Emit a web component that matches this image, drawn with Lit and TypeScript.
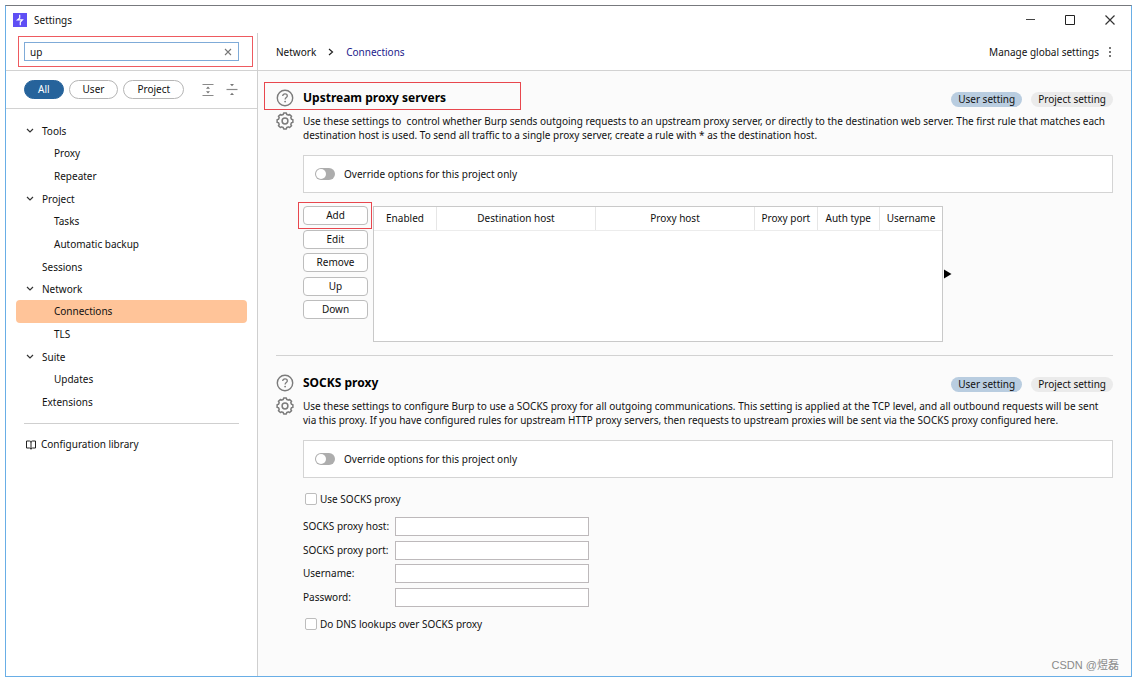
import { LitElement, html, css, svg, nothing } from "lit";
import { customElement, property, state } from "lit/decorators.js";
import { classMap } from "lit/directives/class-map.js";

interface TreeNode {
  label: string;
  children?: string[];
}

const TREE: TreeNode[] = [
  { label: "Tools", children: ["Proxy", "Repeater"] },
  { label: "Project", children: ["Tasks", "Automatic backup"] },
  { label: "Sessions" },
  { label: "Network", children: ["Connections", "TLS"] },
  { label: "Suite", children: ["Updates"] },
  { label: "Extensions" },
];

const COLUMNS = ["Enabled", "Destination host", "Proxy host", "Proxy port", "Auth type", "Username"];

const base = css`
  *,
  *::before,
  *::after {
    box-sizing: border-box;
  }
  button,
  input {
    font: inherit;
    color: inherit;
    margin: 0;
  }
  button {
    padding: 0;
    border: 0;
    background: none;
  }
  a {
    color: inherit;
    text-decoration: none;
  }
  svg {
    display: block;
  }
`;

function gearPath(cx: number, cy: number, inner: number, outer: number, teeth: number): string {
  const points: string[] = [];
  const step = (Math.PI * 2) / teeth;
  for (let i = 0; i < teeth; i++) {
    const a = i * step - Math.PI / 2;
    const at = (r: number, angle: number) =>
      `${(cx + r * Math.cos(angle)).toFixed(2)} ${(cy + r * Math.sin(angle)).toFixed(2)}`;
    points.push(
      at(inner, a - step * 0.34),
      at(outer, a - step * 0.22),
      at(outer, a + step * 0.22),
      at(inner, a + step * 0.34),
    );
  }
  return `M${points.join("L")}Z`;
}

const GEAR = gearPath(9, 9, 6.7, 8, 8);

const helpIcon = svg`<svg width="18" height="18" viewBox="0 0 18 18" fill="none" stroke="#7b7b7b">
  <circle cx="9" cy="9" r="7.7" stroke-width="1.4"/>
  <path d="M6.7 7.1C6.7 5.7 7.7 4.8 9 4.8s2.3.9 2.3 2.1c0 1.5-2.2 1.8-2.2 3.5" stroke-width="1.3"/>
  <circle cx="9.1" cy="12.6" r=".9" fill="#7b7b7b" stroke="none"/>
</svg>`;

const gearIcon = svg`<svg width="18" height="18" viewBox="0 0 18 18" fill="none" stroke="#7b7b7b" stroke-width="1.5" stroke-linejoin="round">
  <path d=${GEAR}/>
  <circle cx="9" cy="9" r="2.9"/>
</svg>`;

@customElement("settings-section")
class SettingsSection extends LitElement {
  @property() heading = "";
  @property() description = "";
  @property({ type: Boolean }) marked = false;

  static styles = [
    base,
    css`
      :host {
        display: grid;
        grid-template-columns: 18px minmax(0, 1fr);
        column-gap: 9px;
      }
      .icons {
        display: flex;
        flex-direction: column;
        gap: 5px;
        padding-top: 3px;
      }
      .head {
        position: relative;
        display: flex;
        align-items: center;
        justify-content: space-between;
        height: 27px;
      }
      .heading {
        margin: 0;
        font-size: 12px;
        line-height: 20px;
        padding-bottom: 4px;
        font-weight: 700;
        color: #000;
      }
      .badges {
        display: flex;
        gap: 9px;
      }
      .badge {
        padding: 0 7px;
        border-radius: 8px;
        line-height: 15px;
        background: #ebebeb;
      }
      .badge.active {
        background: #b9cde0;
      }
      .description {
        margin: 1px 0 13px;
        line-height: 14px;
      }
      .override {
        display: flex;
        align-items: center;
        gap: 9px;
        height: 38px;
        padding: 0 11px;
        margin-bottom: 13px;
        background: #fff;
        border: 1px solid #d4d4d4;
      }
      .switch {
        appearance: none;
        width: 20px;
        height: 12px;
        padding: 1px;
        border-radius: 6px;
        background: #adadad;
      }
      .switch::before {
        content: "";
        display: block;
        width: 10px;
        height: 10px;
        border-radius: 5px;
        background: #fff;
      }
      .switch:checked::before {
        margin-left: 8px;
      }
      .mark {
        position: absolute;
        left: -39px;
        top: -4px;
        width: 257px;
        height: 28px;
        border: 1px solid #e8474e;
        pointer-events: none;
      }
    `,
  ];

  render() {
    return html`
      <div class="icons">
        <button aria-label="Help">${helpIcon}</button>
        <button aria-label="Section options">${gearIcon}</button>
      </div>
      <section>
        <div class="head">
          <h2 class="heading">${this.heading}</h2>
          <div class="badges">
            <button class="badge active">User setting</button>
            <button class="badge">Project setting</button>
          </div>
          ${this.marked ? html`<div class="mark"></div>` : nothing}
        </div>
        <p class="description">${this.description}</p>
        <div class="override">
          <input class="switch" type="checkbox" role="switch" id="override" />
          <label for="override">Override options for this project only</label>
        </div>
        <slot></slot>
      </section>
    `;
  }
}

@customElement("proxy-rules")
class ProxyRules extends LitElement {
  static styles = [
    base,
    css`
      :host {
        display: flex;
        gap: 5px;
      }
      .actions {
        display: flex;
        flex-direction: column;
        justify-content: space-between;
        width: 65px;
        height: 113px;
      }
      .action {
        position: relative;
        height: 19px;
        border: 1px solid #bdbdbd;
        border-radius: 4px;
        background: #fff;
        line-height: 17px;
      }
      .mark {
        position: absolute;
        inset: -5px -5px -5px -6px;
        border: 1px solid #e8474e;
        pointer-events: none;
      }
      .frame {
        flex: 0 1 570px;
        height: 136px;
        border: 1px solid #c9c9c9;
        background: #fff;
      }
      .rules {
        width: 100%;
        table-layout: fixed;
        border-collapse: collapse;
      }
      .column {
        width: 11%;
        height: 23px;
        padding: 0;
        font-weight: 400;
        border-right: 1px solid #e6e6e6;
        border-bottom: 1px solid #ececec;
      }
      .column.wide {
        width: 28%;
      }
      .column:last-child {
        border-right: 0;
      }
      .expand {
        align-self: center;
        margin-left: -4px;
      }
    `,
  ];

  render() {
    return html`
      <div class="actions">
        ${["Add", "Edit", "Remove", "Up", "Down"].map(
          (name) => html`<button class="action">
            ${name}${name === "Add" ? html`<span class="mark"></span>` : nothing}
          </button>`,
        )}
      </div>
      <div class="frame">
        <table class="rules">
          <thead>
            <tr>
              ${COLUMNS.map(
                (name) =>
                  html`<th class=${classMap({ column: true, wide: name.endsWith("host") })}>${name}</th>`,
              )}
            </tr>
          </thead>
          <tbody></tbody>
        </table>
      </div>
      <button class="expand" aria-label="Expand">
        <svg width="8" height="10" viewBox="0 0 8 10"><path d="M0 .5L7.5 5 0 9.5z" fill="#000" /></svg>
      </button>
    `;
  }
}

@customElement("socks-form")
class SocksForm extends LitElement {
  static styles = [
    base,
    css`
      :host {
        display: block;
      }
      .check {
        display: flex;
        align-items: center;
        gap: 3px;
        height: 16px;
        padding-left: 2px;
      }
      .box {
        appearance: none;
        width: 12px;
        height: 12px;
        border: 1px solid #bdbdbd;
        border-radius: 2px;
        background: #fff;
      }
      .box:checked {
        background: #26639b;
      }
      .fields {
        display: grid;
        grid-template-columns: 88px minmax(0, 194px);
        column-gap: 4px;
        align-items: center;
        align-content: space-between;
        height: 90px;
        margin: 10px 0 9px;
      }
      .field {
        width: 100%;
        height: 19px;
        padding: 0 4px;
        border: 1px solid #bdb9bb;
        background: #fff;
        outline: 0;
      }
      .name {
        white-space: nowrap;
      }
    `,
  ];

  render() {
    const fields = [
      ["host", "SOCKS proxy host:", "text"],
      ["port", "SOCKS proxy port:", "text"],
      ["user", "Username:", "text"],
      ["pass", "Password:", "password"],
    ];
    return html`
      <div class="check">
        <input class="box" type="checkbox" id="use" /><label for="use">Use SOCKS proxy</label>
      </div>
      <div class="fields">
        ${fields.map(
          ([id, label, type]) => html`
            <label class="name" for=${id}>${label}</label>
            <input class="field" id=${id} type=${type} />
          `,
        )}
      </div>
      <div class="check">
        <input class="box" type="checkbox" id="dns" /><label for="dns">Do DNS lookups over SOCKS proxy</label>
      </div>
    `;
  }
}

@customElement("app-root")
class AppRoot extends LitElement {
  @state() private selected = "Connections";

  static styles = [
    base,
    css`
      :host {
        box-sizing: border-box;
        display: flex;
        min-height: 100vh;
        padding: 5px 2px 3px 5px;
        background: #fff;
        color: #111;
        font: 10px/15px "Noto Sans", "Noto Sans CJK SC", sans-serif;
      }
      .window {
        position: relative;
        flex: 1;
        min-width: 0;
        display: flex;
        flex-direction: column;
        border: 1px solid #69aee6;
        border-top-color: #77797d;
      }
      .titlebar {
        display: flex;
        align-items: center;
        gap: 7px;
        height: 27px;
        padding: 0 14px 0 7px;
      }
      .title {
        flex: 1;
        line-height: 16px;
      }
      .controls {
        display: flex;
        gap: 26px;
      }
      .body {
        flex: 1;
        display: grid;
        grid-template-columns: 252px minmax(0, 1fr);
      }
      .sidebar {
        border-right: 1px solid #cfcfcf;
      }
      .search {
        height: 38px;
        padding: 3px 4px 3px 12px;
        border-bottom: 1px solid #d2d2d2;
      }
      .mark {
        display: flex;
        height: 31px;
        padding: 5px 13px 5px 5px;
        border: 1px solid #ee5a60;
      }
      .searchbox {
        flex: 1;
        display: flex;
        align-items: center;
        padding: 0 6px 0 5px;
        border: 1px solid #7fabd8;
      }
      .query {
        flex: 1;
        min-width: 0;
        height: 17px;
        padding: 0;
        border: 0;
        outline: 0;
        background: none;
      }
      .filters {
        display: flex;
        align-items: center;
        gap: 5px;
        height: 38px;
        padding-left: 18px;
        border-bottom: 1px solid #d2d2d2;
      }
      .filter {
        height: 19px;
        padding: 0 13px;
        border: 1px solid #b5b5b5;
        border-radius: 10px;
        background: #fff;
      }
      .filter.on {
        background: #26639b;
        border-color: #26639b;
        color: #fff;
      }
      .tools {
        display: flex;
        gap: 12px;
        padding-left: 13px;
      }
      .tree {
        display: flex;
        flex-direction: column;
        padding: 11px 10px 0;
      }
      .group,
      .leaf {
        display: flex;
        align-items: center;
        border-radius: 4px;
      }
      .group {
        height: 22px;
        padding-left: 10px;
        gap: 8px;
      }
      .chevron {
        width: 8px;
      }
      .leaf {
        height: 23px;
        padding-left: 38px;
      }
      .leaf.selected {
        background: #ffc499;
      }
      .library {
        display: flex;
        align-items: center;
        gap: 5px;
        margin: 10px 18px 0;
        padding: 13px 2px;
        border-top: 1px solid #cfcfcf;
      }
      .main {
        display: flex;
        flex-direction: column;
      }
      .crumbs {
        display: flex;
        align-items: center;
        height: 38px;
        padding: 0 19px 0 18px;
        line-height: 16px;
        border-bottom: 1px solid #d2d2d2;
      }
      .arrow {
        margin: 0 12px;
      }
      .current {
        color: #1c1c8c;
      }
      .manage {
        display: flex;
        align-items: center;
        gap: 9px;
        margin-left: auto;
      }
      .page {
        flex: 1;
        padding: 15px 18px 20px;
        background: #fbfbfb;
      }
      .rule {
        margin: 13px 0 15px;
        border: 0;
        border-top: 1px solid #d2d2d2;
      }
      .watermark {
        position: absolute;
        right: 12px;
        bottom: 3px;
        font: 11px/16px "Liberation Sans", "Noto Sans CJK SC", sans-serif;
        color: #8a8a8a;
      }
    `,
  ];

  private leaf(name: string) {
    return html`<a
      href="#"
      class=${classMap({ leaf: true, selected: this.selected === name })}
      @click=${(event: Event) => {
        event.preventDefault();
        this.selected = name;
      }}
      >${name}</a
    >`;
  }

  private node(node: TreeNode) {
    return html`
      <a href="#" class="group">
        <span class="chevron">
          ${node.children
            ? svg`<svg width="8" height="6" viewBox="0 0 8 6" fill="none" stroke="#333" stroke-width="1.2"><path d="M1 1l3 3 3-3"/></svg>`
            : nothing}
        </span>
        ${node.label}
      </a>
      ${node.children?.map((child) => this.leaf(child))}
    `;
  }

  render() {
    return html`
      <div class="window">
        <header class="titlebar">
          <svg width="14" height="14" viewBox="0 0 14 14">
            <rect width="14" height="14" fill="#5f4ff5" />
            <path d="M6.7 1.8v3.200L4.600 6.800h4.800L7.300 9v3.200" fill="none" stroke="#fff" stroke-width="1.200" />
          </svg>
          <span class="title">Settings</span>
          <div class="controls">
            <button aria-label="Minimize">
              <svg width="14" height="14" viewBox="0 0 14 14"><path d="M3 6.5h9" stroke="#444" /></svg>
            </button>
            <button aria-label="Maximize">
              <svg width="14" height="14" viewBox="0 0 14 14">
                <path d="M2.5 2.5h9v9h-9z" fill="none" stroke="#222" />
              </svg>
            </button>
            <button aria-label="Close">
              <svg width="14" height="14" viewBox="0 0 14 14">
                <path d="M2.5 2.5l9 9M11.5 2.5l-9 9" stroke="#333" stroke-width="1.2" />
              </svg>
            </button>
          </div>
        </header>
        <div class="body">
          <aside class="sidebar">
            <div class="search">
              <div class="mark">
                <div class="searchbox">
                  <input class="query" type="text" aria-label="Search settings" value="up" />
                  <button aria-label="Clear">
                    <svg width="8" height="8" viewBox="0 0 8 8">
                      <path d="M1 1l6 6M7 1L1 7" stroke="#777" stroke-width="1.1" />
                    </svg>
                  </button>
                </div>
              </div>
            </div>
            <div class="filters">
              <button class="filter on">All</button>
              <button class="filter">User</button>
              <button class="filter">Project</button>
              <div class="tools">
                <button aria-label="Expand all">
                  <svg width="12" height="14" viewBox="0 0 12 14">
                    <path d="M.5 1.5h11M.5 12.5h11" stroke="#8a8a8a" stroke-width="1.2" />
                    <path d="M4 5.8L6 3.6l2 2.2zM4 8.2l2 2.2 2-2.2z" fill="#777" />
                  </svg>
                </button>
                <button aria-label="Collapse all">
                  <svg width="12" height="14" viewBox="0 0 12 14">
                    <path d="M.5 6.5h11" stroke="#8a8a8a" stroke-width="1.2" />
                    <path d="M4 1l2 2.200 2-2.200zM4 12l2-2.200 2 2.200z" fill="#777" />
                  </svg>
                </button>
              </div>
            </div>
            <nav class="tree">${TREE.map((node) => this.node(node))}</nav>
            <a href="#" class="library">
              <svg width="10" height="10" viewBox="0 0 10 10" fill="none" stroke="#222">
                <path d="M.5 1h3Q5 1 5 2.3 5 1 6.500 1h3v7h-3Q5 8 5 9.300 5 8 3.500 8h-3zM5 2v7" />
              </svg>
              Configuration library
            </a>
          </aside>
          <main class="main">
            <div class="crumbs">
              <a href="#">Network</a>
              <svg class="arrow" width="6" height="8" viewBox="0 0 6 8" fill="none" stroke="#222" stroke-width="1.2">
                <path d="M1 1l3.500 3L1 7" />
              </svg>
              <a href="#" class="current">Connections</a>
              <button class="manage">
                Manage global settings
                <svg width="4" height="12" viewBox="0 0 4 12" fill="#777">
                  <path d="M1 1h2v2H1zM1 5h2v2H1zM1 9h2v2H1z" />
                </svg>
              </button>
            </div>
            <div class="page">
              <settings-section
                marked
                heading="Upstream proxy servers"
                .description=${"Use these settings to \u00a0control whether Burp sends outgoing requests to an upstream proxy server, or directly to the destination web server. The first rule that matches each destination host is used. To send all traffic to a single proxy server, create a rule with * as the destination host."}
              >
                <proxy-rules></proxy-rules>
              </settings-section>
              <hr class="rule" />
              <settings-section
                heading="SOCKS proxy"
                .description=${"Use these settings to configure Burp to use a SOCKS proxy for all outgoing communications. This setting is applied at the TCP level, and all outbound requests will be sent via this proxy. If you have configured rules for upstream HTTP proxy servers, then requests to upstream proxies will be sent via the SOCKS proxy configured here."}
              >
                <socks-form></socks-form>
              </settings-section>
            </div>
          </main>
        </div>
        <div class="watermark">CSDN @煜磊</div>
      </div>
    `;
  }
}
